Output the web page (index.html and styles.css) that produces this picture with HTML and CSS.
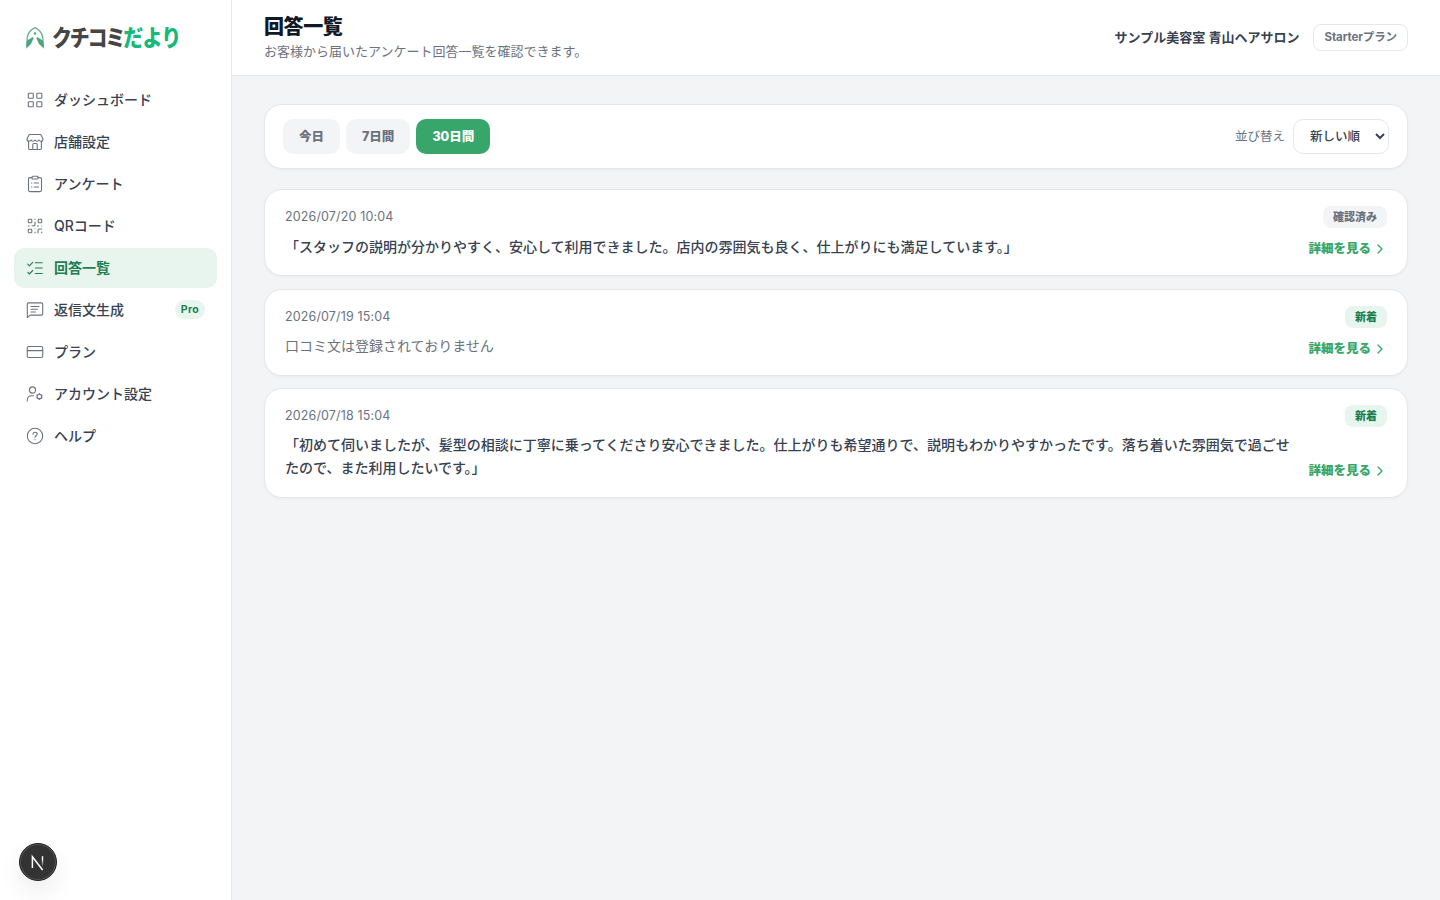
FILE: index.html
```html
<!DOCTYPE html>
<html lang="ja">
<head>
    <meta charset="UTF-8">
    <meta name="viewport" content="width=device-width, initial-scale=1.0">
    <title>回答一覧 | クチコミだより</title>
    <link rel="stylesheet" href="styles.css">
</head>
<body>
    <div class="layout">
        <aside class="sidebar">
            <div class="logo">
                <svg class="logo-mark" viewBox="0 0 20 24">
                    <path class="logo-line" d="M1.600 20 L2.300 11 C3.200 7 6 3.400 10 1.600 C14 3.400 16.800 7 17.700 11 L18.400 20"/>
                    <path class="logo-fill" d="M1 22.800 L2 14.500 L7.800 11 L8.600 12.200 L6 18 Z M19 22.800 L18 14.500 L12.200 11 L11.400 12.200 L14 18 Z"/>
                    <circle class="logo-fill" cx="10" cy="7.500" r="1.200"/>
                </svg>
                <span class="logo-text">クチコミ<b>だより</b></span>
            </div>
            <nav class="nav">
                <a class="nav-item">
                    <svg class="icon" viewBox="0 0 18 18"><rect x="2.3" y="2.3" width="5" height="5" rx=".6"/><rect x="10.8" y="2.3" width="5" height="5" rx=".6"/><rect x="2.3" y="10.8" width="5" height="5" rx=".6"/><rect x="10.8" y="10.8" width="5" height="5" rx=".6"/></svg>
                    <span>ダッシュボード</span>
                </a>
                <a class="nav-item">
                    <svg class="icon" viewBox="0 0 18 18"><path d="M4 1.5h10c.6 0 1 .3 1.2.8L17 6c0 1.500-1 2.300-2.100 2.300S13 7.500 12.800 6.900c-.3.900-1 1.400-1.900 1.400S9.300 7.700 9 6.900c-.3.800-1 1.400-1.900 1.400S5.500 7.800 5.200 6.900C5 7.500 4.200 8.300 3.100 8.300S1 7.500 1 6l1.800-3.700c.2-.5.6-.8 1.200-.8z"/><path d="M2.600 8.300v7c0 .7.500 1.200 1.200 1.200h10.400c.7 0 1.200-.5 1.200-1.200v-7M6.800 16.500v-5c0-.6.400-1 1-1h2.400c.6 0 1 .4 1 1v5"/></svg>
                    <span>店舗設定</span>
                </a>
                <a class="nav-item">
                    <svg class="icon" viewBox="0 0 18 18"><path d="M6 2.600H4c-.9 0-1.500.6-1.500 1.500v11c0 .9.600 1.500 1.500 1.500h10c.9 0 1.500-.6 1.500-1.500v-11c0-.9-.6-1.500-1.500-1.500h-2"/><rect x="6" y="1.300" width="6" height="2.700" rx=".8"/><path d="M5.600 8h.3M8.300 8h4.200M5.600 12h.3M8.300 12h4.200"/></svg>
                    <span>アンケート</span>
                </a>
                <a class="nav-item">
                    <svg class="icon" viewBox="0 0 18 18"><rect x="2.300" y="2.300" width="3.500" height="3.500" rx=".6"/><rect x="12.200" y="2.300" width="3.500" height="3.500" rx=".6"/><rect x="2.300" y="12.200" width="3.500" height="3.500" rx=".6"/><path d="M9 2.300v.1M9 5v2.500c0 .8-.6 1.300-1.300 1.300H6M2.300 9h.8M9 11.700v.1M9 15v.8M11.500 9h1M15.700 9v.1M15.700 12h-2.200c-.9 0-1.500.6-1.500 1.500v2.300M15.700 15v.8"/></svg>
                    <span>QRコード</span>
                </a>
                <a class="nav-item active">
                    <svg class="icon" viewBox="0 0 18 18"><path d="M1.800 5.200l1.600 1.600 3.300-3.500M1.800 13.400L3.400 15l3.300-3.500M9.300 3.700h7M9.300 9h7M9.300 14.500h7"/></svg>
                    <span>回答一覧</span>
                </a>
                <a class="nav-item">
                    <svg class="icon" viewBox="0 0 18 18"><path d="M1.300 16.500V3.200c0-.8.500-1.300 1.300-1.300h12.800c.8 0 1.300.5 1.300 1.300v9.600c0 .8-.5 1.300-1.300 1.300H4.200zM5 5.500h8M5 8.300h6.500M5 11h4.500"/></svg>
                    <span>返信文生成</span>
                    <em class="pro">Pro</em>
                </a>
                <a class="nav-item">
                    <svg class="icon" viewBox="0 0 18 18"><rect x="1.300" y="3.500" width="15.400" height="11" rx="1.500"/><path d="M1.300 7.600h15.400"/></svg>
                    <span>プラン</span>
                </a>
                <a class="nav-item">
                    <svg class="icon" viewBox="0 0 18 18"><circle cx="6.500" cy="5" r="3.100"/><path d="M1.300 16v-1.200c0-2.400 1.900-4.100 4.200-4.100h2"/><circle cx="13.400" cy="11.500" r="2.300"/><path d="M13.400 8.500v.7M13.400 13.800v.7M10.800 10l.6.400M15.400 12.600l.6.400M10.800 13l.6-.4M15.400 10.400l.6-.4"/></svg>
                    <span>アカウント設定</span>
                </a>
                <a class="nav-item">
                    <svg class="icon" viewBox="0 0 18 18"><circle cx="9" cy="9" r="7.700"/><path d="M6.900 7.200c.1-1.200 1-1.900 2.200-1.900s2.100.8 2.100 1.800c0 1.500-2.200 1.700-2.200 3.200M9 12.600v.1"/></svg>
                    <span>ヘルプ</span>
                </a>
            </nav>
        </aside>

        <div class="content">
            <header class="header">
                <div>
                    <h1>回答一覧</h1>
                    <p class="lead">お客様から届いたアンケート回答一覧を確認できます。</p>
                </div>
                <div class="account">
                    <span class="shop">サンプル美容室 青山ヘアサロン</span>
                    <span class="plan">Starterプラン</span>
                </div>
            </header>

            <main class="main">
                <div class="filter">
                    <div class="ranges">
                        <button class="range">今日</button>
                        <button class="range">7日間</button>
                        <button class="range selected">30日間</button>
                    </div>
                    <div class="sort">
                        <label for="sort">並び替え</label>
                        <select id="sort">
                            <option>新しい順</option>
                            <option>古い順</option>
                        </select>
                    </div>
                </div>

                <div class="answers">
                    <article class="card">
                        <div class="card-body">
                            <time>2026/07/20 10:04</time>
                            <p class="comment">「スタッフの説明が分かりやすく、安心して利用できました。店内の雰囲気も良く、仕上がりにも満足しています。」</p>
                        </div>
                        <div class="card-side">
                            <span class="status read">確認済み</span>
                            <a class="detail">詳細を見る<svg viewBox="0 0 14 14"><path d="M5 3l4 4-4 4"/></svg></a>
                        </div>
                    </article>
                    <article class="card">
                        <div class="card-body">
                            <time>2026/07/19 15:04</time>
                            <p class="comment empty">口コミ文は登録されておりません</p>
                        </div>
                        <div class="card-side">
                            <span class="status">新着</span>
                            <a class="detail">詳細を見る<svg viewBox="0 0 14 14"><path d="M5 3l4 4-4 4"/></svg></a>
                        </div>
                    </article>
                    <article class="card">
                        <div class="card-body">
                            <time>2026/07/18 15:04</time>
                            <p class="comment">「初めて伺いましたが、髪型の相談に丁寧に乗ってくださり安心できました。仕上がりも希望通りで、説明もわかりやすかったです。落ち着いた雰囲気で過ごせたので、また利用したいです。」</p>
                        </div>
                        <div class="card-side">
                            <span class="status">新着</span>
                            <a class="detail">詳細を見る<svg viewBox="0 0 14 14"><path d="M5 3l4 4-4 4"/></svg></a>
                        </div>
                    </article>
                </div>
            </main>
        </div>
    </div>

    <div class="dev-badge">
        <svg viewBox="0 0 38 38">
            <defs>
                <linearGradient id="fade" x1="0" y1="0" x2="0" y2="1">
                    <stop offset="0.3" stop-color="#fff"/>
                    <stop offset="1" stop-color="#fff" stop-opacity="0.1"/>
                </linearGradient>
            </defs>
            <path d="M13.400 25V13.800L23.600 27" fill="none" stroke="#fff" stroke-width="1.500"/>
            <rect x="22.800" y="13.200" width="1.400" height="10" fill="url(#fade)"/>
        </svg>
    </div>
</body>
</html>
```
FILE: styles.css
```css
* {
    box-sizing: border-box;
}
body {
    margin: 0;
    background: #f2f4f6;
    color: #374151;
    font-family: Inter, "Noto Sans CJK JP", sans-serif;
    font-size: 14px;
}
h1, p {
    margin: 0;
}
.layout {
    display: flex;
    min-height: 100vh;
}

/* サイドバー */
.sidebar {
    width: 232px;
    flex-shrink: 0;
    background: #fff;
    border-right: 1px solid #e5e7eb;
}
.logo {
    display: flex;
    align-items: center;
    gap: 7px;
    height: 80px;
    padding: 0 0 4px 25px;
}
.logo-mark {
    width: 20px;
    height: 24px;
}
.logo-line {
    fill: none;
    stroke: #5bb08a;
    stroke-width: 1.2;
}
.logo-fill {
    fill: #4fa580;
}
.logo-text {
    font-size: 20px;
    font-weight: 900;
    letter-spacing: -2.2px;
    line-height: 24px;
    color: #454545;
    transform: scaleY(1.12);
    white-space: nowrap;
}
.logo-text b {
    font-weight: 900;
    letter-spacing: -0.8px;
    color: #16b87c;
}
.nav {
    display: flex;
    flex-direction: column;
    gap: 2px;
    padding: 0 14px;
}
.nav-item {
    display: flex;
    align-items: center;
    gap: 10px;
    height: 40px;
    padding: 0 12px;
    border-radius: 10px;
    font-weight: 500;
    color: #374151;
}
.nav-item span,
.nav-item em {
    margin-bottom: 2px;
}
.nav-item.active {
    background: #e8f5ee;
    color: #1d7f4f;
    font-weight: 700;
}
.icon {
    width: 18px;
    height: 18px;
    fill: none;
    stroke: #6b7280;
    stroke-width: 1.1;
    stroke-linecap: round;
    stroke-linejoin: round;
}
.active .icon {
    stroke: #1d7f4f;
}
.pro {
    margin-left: auto;
    padding: 0 6px;
    border-radius: 10px;
    background: #e8f5ee;
    color: #1d7f4f;
    font-size: 10.5px;
    font-style: normal;
    font-weight: 700;
    line-height: 19px;
    letter-spacing: 0.3px;
}

/* ヘッダー */
.content {
    flex: 1;
    min-width: 0;
}
.header {
    display: flex;
    justify-content: space-between;
    align-items: center;
    height: 76px;
    padding: 0 32px;
    background: #fff;
    border-bottom: 1px solid #e5e7eb;
}
.header h1 {
    font-size: 20px;
    font-weight: 800;
    line-height: 26px;
    letter-spacing: -0.4px;
    color: #111827;
}
.lead {
    margin-top: 1px;
    padding-bottom: 1px;
    font-size: 13px;
    line-height: 20px;
    color: #6b7280;
}
.account {
    display: flex;
    align-items: center;
    gap: 14px;
}
.shop {
    padding-bottom: 3px;
    font-size: 13px;
    font-weight: 600;
}
.plan {
    padding: 0 10px;
    border: 1px solid #e5e7eb;
    border-radius: 8px;
    font-size: 11.5px;
    font-weight: 700;
    line-height: 25px;
    letter-spacing: -0.1px;
    color: #6b7280;
}

/* 絞り込み */
.main {
    padding: 28px 32px;
}
.filter {
    display: flex;
    justify-content: space-between;
    align-items: center;
    height: 65px;
    padding: 0 18px;
    background: #fff;
    border: 1px solid #e5e7eb;
    border-radius: 18px;
    box-shadow: 0 1px 3px rgba(0, 0, 0, 0.04);
}
.ranges {
    display: flex;
    gap: 6px;
}
.range {
    height: 35px;
    padding: 0 16px 3px;
    border: none;
    border-radius: 10px;
    background: #f3f4f6;
    color: #6b7280;
    font-family: inherit;
    font-size: 12.5px;
    font-weight: 800;
}
.range.selected {
    background: #38a66b;
    color: #fff;
}
.sort {
    display: flex;
    align-items: center;
    gap: 8px;
    font-size: 12.5px;
    color: #6b7280;
}
.sort label {
    padding-bottom: 3px;
}
.sort select {
    width: 96px;
    height: 35px;
    padding: 0 0 0 12px;
    border: 1px solid #e5e7eb;
    border-radius: 10px;
    background: #fff;
    color: #374151;
    font-family: inherit;
    font-size: 12.5px;
    font-weight: 500;
}

/* 回答カード */
.answers {
    display: flex;
    flex-direction: column;
    gap: 12.3px;
    margin-top: 20.4px;
}
.card {
    display: flex;
    gap: 14px;
    padding: 16px 20px;
    background: #fff;
    border: 1px solid #e5e7eb;
    border-radius: 18px;
    box-shadow: 0 1px 3px rgba(0, 0, 0, 0.04);
}
.card-body {
    flex: 1;
    min-width: 0;
}
.card time {
    display: block;
    padding-top: 1px;
    font-size: 12.5px;
    line-height: 20px;
    color: #6b7280;
    letter-spacing: 0.14px;
}
.comment {
    margin-top: 7.500px;
    padding-bottom: 1.500px;
    font-weight: 500;
    line-height: 23px;
    color: #374151;
}
.comment.empty {
    font-weight: 400;
    color: #6b7280;
}
.card-side {
    display: flex;
    flex-direction: column;
    justify-content: space-between;
    align-items: flex-end;
}
.status {
    padding: 0 10px;
    border-radius: 8px;
    background: #e8f5ee;
    color: #1d7f4f;
    font-size: 11px;
    font-weight: 800;
    line-height: 22px;
}
.status.read {
    background: #f3f4f6;
    color: #6b7280;
}
.detail {
    display: flex;
    align-items: center;
    gap: 2px;
    font-size: 12.5px;
    font-weight: 800;
    line-height: 20px;
    color: #38a66b;
    white-space: nowrap;
}
.detail svg {
    width: 14px;
    height: 14px;
    fill: none;
    stroke: currentColor;
    stroke-width: 1.3;
    stroke-linecap: round;
    stroke-linejoin: round;
}

/* 左下の丸いバッジ */
.dev-badge {
    position: fixed;
    left: 19px;
    bottom: 19px;
    width: 38px;
    height: 38px;
    border: 1px solid #222;
    border-radius: 50%;
    background: #333;
    box-shadow: inset 0 0 0 1px #555, 0 12px 24px rgba(0, 0, 0, 0.07);
}
.dev-badge svg {
    display: block;
    margin: -1px;
    width: 38px;
    height: 38px;
}
```
